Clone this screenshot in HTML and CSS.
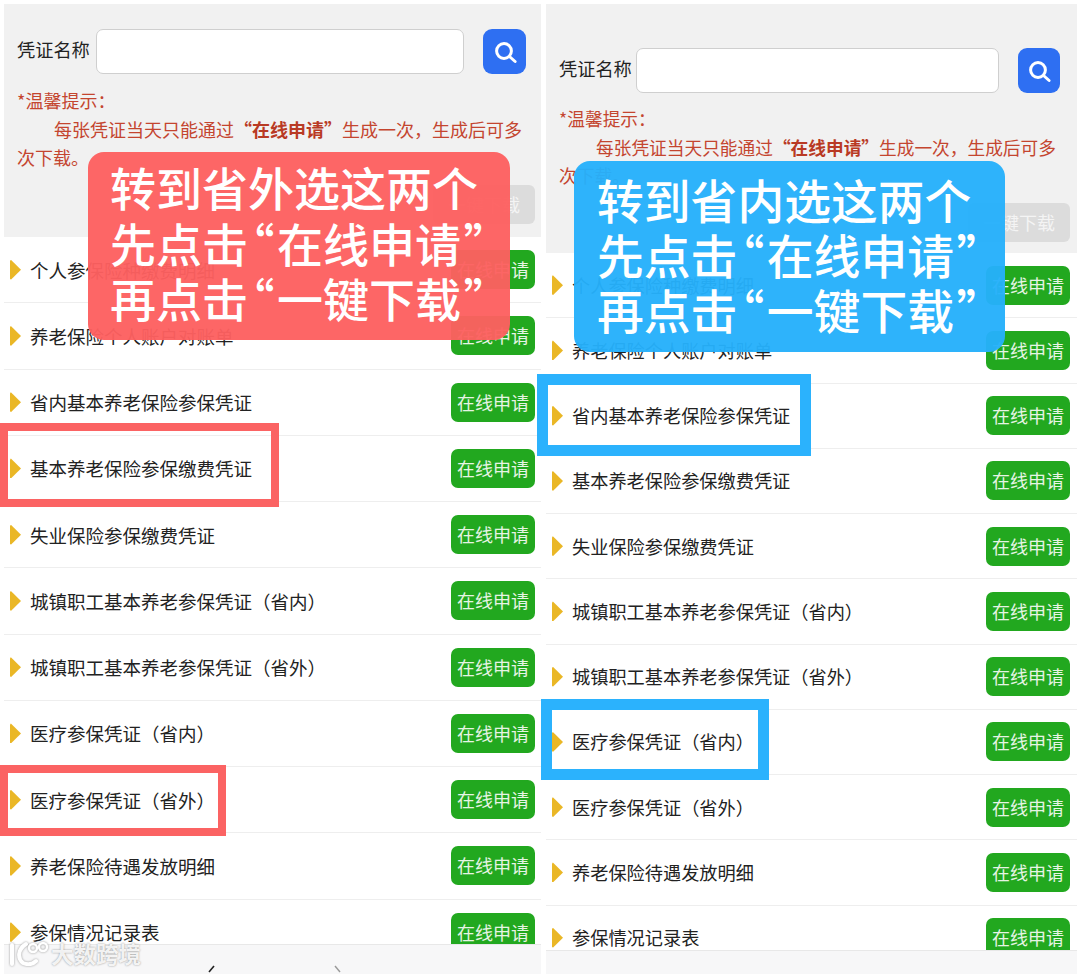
FILE: index.html
```html
<!DOCTYPE html>
<html lang="zh-CN">

<head>
    <meta charset="UTF-8">
    <meta name="viewport" content="width=device-width, initial-scale=1.0">
    <title>凭证名称</title>
    <link rel="stylesheet" href="styles.css">
</head>

<body>
    <div class="screens">

        <!-- Tela da esquerda:省外 -->
        <section class="phone phone-left">
            <div class="search-box">
                <div class="search-row">
                    <label class="search-label">凭证名称</label>
                    <div class="search-input"></div>
                    <button class="search-btn">
                        <svg width="26" height="26" viewBox="0 0 26 26"><circle cx="12" cy="12" r="7.4" fill="none" stroke="#fff" stroke-width="3"/><path d="M17.5 17.5l5.6 5" stroke="#fff" stroke-width="3" stroke-linecap="round"/></svg>
                    </button>
                </div>
                <p class="tip-title">*温馨提示：</p>
                <p class="tip-text">每张凭证当天只能通过<b>“在线申请”</b>生成一次，生成后可多次下载。</p>
                <div class="download-row"><span class="download-btn">一键下载</span></div>
            </div>
            <ul class="cert-list">
                <li><i></i><span>个人参保险种缴费明细</span><a>在线申请</a></li>
                <li><i></i><span>养老保险个人账户对账单</span><a>在线申请</a></li>
                <li><i></i><span>省内基本养老保险参保凭证</span><a>在线申请</a></li>
                <li><i></i><span>基本养老保险参保缴费凭证</span><a>在线申请</a></li>
                <li><i></i><span>失业保险参保缴费凭证</span><a>在线申请</a></li>
                <li><i></i><span>城镇职工基本养老参保凭证（省内）</span><a>在线申请</a></li>
                <li><i></i><span>城镇职工基本养老参保凭证（省外）</span><a>在线申请</a></li>
                <li><i></i><span>医疗参保凭证（省内）</span><a>在线申请</a></li>
                <li><i></i><span>医疗参保凭证（省外）</span><a>在线申请</a></li>
                <li><i></i><span>养老保险待遇发放明细</span><a>在线申请</a></li>
                <li><i></i><span>参保情况记录表</span><a>在线申请</a></li>
            </ul>
            <div class="bottom-bar">
                <svg class="nav-ticks" width="134" height="8" viewBox="0 0 134 8"><path d="M6 1L1 7" stroke="#222" stroke-width="1.6"/><path d="M127 1l5 6" stroke="#999" stroke-width="1.4"/></svg>
            </div>
        </section>

        <!-- Tela da direita: 省内 -->
        <section class="phone phone-right">
            <div class="search-box">
                <div class="search-row">
                    <label class="search-label">凭证名称</label>
                    <div class="search-input"></div>
                    <button class="search-btn">
                        <svg width="26" height="26" viewBox="0 0 26 26"><circle cx="12" cy="12" r="7.4" fill="none" stroke="#fff" stroke-width="3"/><path d="M17.5 17.5l5.6 5" stroke="#fff" stroke-width="3" stroke-linecap="round"/></svg>
                    </button>
                </div>
                <p class="tip-title">*温馨提示：</p>
                <p class="tip-text">每张凭证当天只能通过<b>“在线申请”</b>生成一次，生成后可多次下载。</p>
                <div class="download-row"><span class="download-btn">一键下载</span></div>
            </div>
            <ul class="cert-list">
                <li><i></i><span>个人参保险种缴费明细</span><a>在线申请</a></li>
                <li><i></i><span>养老保险个人账户对账单</span><a>在线申请</a></li>
                <li><i></i><span>省内基本养老保险参保凭证</span><a>在线申请</a></li>
                <li><i></i><span>基本养老保险参保缴费凭证</span><a>在线申请</a></li>
                <li><i></i><span>失业保险参保缴费凭证</span><a>在线申请</a></li>
                <li><i></i><span>城镇职工基本养老参保凭证（省内）</span><a>在线申请</a></li>
                <li><i></i><span>城镇职工基本养老参保凭证（省外）</span><a>在线申请</a></li>
                <li><i></i><span>医疗参保凭证（省内）</span><a>在线申请</a></li>
                <li><i></i><span>医疗参保凭证（省外）</span><a>在线申请</a></li>
                <li><i></i><span>养老保险待遇发放明细</span><a>在线申请</a></li>
                <li><i></i><span>参保情况记录表</span><a>在线申请</a></li>
            </ul>
            <div class="bottom-bar"></div>
        </section>

        <!-- Marcações por cima das telas -->
        <div class="callout callout-red">转到省外选这两个<br>先点击<q>“</q>在线申请<q>”</q><br>再点击<q>“</q>一键下载<q>”</q></div>
        <div class="callout callout-blue">转到省内选这两个<br>先点击<q>“</q>在线申请<q>”</q><br>再点击<q>“</q>一键下载<q>”</q></div>

        <div class="mark mark-red mark-r1"></div>
        <div class="mark mark-red mark-r2"></div>
        <div class="mark mark-blue mark-b1"></div>
        <div class="mark mark-blue mark-b2"></div>

        <div class="watermark">
            <svg width="42" height="26" viewBox="0 0 42 26"><path d="M3 5v19M17 4C9 9 8 18 14 23c5 2 10 1 13-2" fill="none" stroke="#fff" stroke-width="4" stroke-linecap="round"/><circle cx="24" cy="8" r="4" fill="none" stroke="#fff" stroke-width="2.4"/><circle cx="34" cy="7" r="4" fill="none" stroke="#fff" stroke-width="2.4"/></svg>
            <span>大数跨境</span>
        </div>
    </div>
</body>

</html>
```

FILE: styles.css
```css
* {
    box-sizing: border-box;
}

body {
    margin: 0;
    background-color: #fff;
    font-family: "Noto Sans CJK SC", "Noto Sans", sans-serif;
    color: #222;
}

p {
    margin: 0;
}

/* Duas telas lado a lado */
.screens {
    position: relative;
    display: flex;
    height: 974px;
    overflow: hidden;
    padding-top: 4px;
}

.phone {
    display: flex;
    flex-direction: column;
    height: 100%;
}

.phone-left {
    width: 537px;
    margin-left: 4px;
}

.phone-right {
    width: 531px;
    margin-left: 5px;
}

/* Caixa de busca */
.search-box {
    background-color: #f1f1f1;
    flex: none;
}

.phone-left .search-box {
    height: 233px;
    padding: 25px 6px 0 13px;
}

.phone-right .search-box {
    height: 249px;
    padding: 44px 7px 0 13px;
}

.search-row {
    display: flex;
    align-items: center;
    height: 45px;
}

.search-label {
    font-size: 18.2px;
    flex: none;
    white-space: nowrap;
    padding-bottom: 6px;
}

.phone-left .search-label {
    width: 79px;
}

.phone-right .search-label {
    width: 77px;
}

.search-input {
    height: 100%;
    background-color: #fff;
    border: 1px solid #cfcfcf;
    border-radius: 7px;
}

.phone-left .search-input {
    width: 368px;
}

.phone-right .search-input {
    width: 363px;
}

.search-btn {
    height: 100%;
    padding: 0;
    border: none;
    border-radius: 9px;
    background-color: #2e6ff2;
    display: flex;
    align-items: center;
    justify-content: center;
    margin-left: 19px;
}

.phone-left .search-btn {
    width: 43px;
}

.phone-right .search-btn {
    width: 42px;
}

.tip-title,
.tip-text {
    line-height: 28.5px;
    color: #c4452f;
}

.phone-left .tip-title,
.phone-left .tip-text {
    font-size: 18px;
}

.phone-right .tip-title,
.phone-right .tip-text {
    font-size: 17.7px;
}

.phone-left .tip-title {
    margin-top: 12px;
}

.phone-right .tip-title {
    margin-top: 11px;
}

.tip-text {
    text-indent: 37px;
    padding-right: 6px;
}

.tip-text b {
    font-weight: 700;
    color: #b93a24;
}

.download-row {
    display: flex;
    justify-content: flex-end;
    margin-top: 13px;
}

.download-btn {
    width: 102px;
    height: 39px;
    line-height: 38px;
    text-align: center;
    font-size: 18px;
    color: #f4f4f4;
    background-color: #dcdcdc;
    border-radius: 6px;
}

/* Lista de certificados */
.cert-list {
    list-style-type: none;
    margin: 0;
    padding: 0;
    flex: 1;
    min-height: 0;
    overflow: hidden;
}

.cert-list li {
    display: flex;
    align-items: center;
    border-bottom: 1px solid #eee;
    padding: 0 6px;
}

.phone-left .cert-list li {
    height: 66.25px;
    font-size: 18.5px;
}

.phone-right .cert-list li {
    height: 65.25px;
    font-size: 18.2px;
    padding-right: 7px;
}

.phone-right .cert-list span {
    padding-bottom: 1px;
}

.cert-list i {
    width: 11px;
    height: 20px;
    background-color: #eab726;
    clip-path: polygon(8% 0, 100% 50%, 8% 100%, 0 94%, 0 6%);
    margin-right: 9px;
    flex: none;
}

.cert-list span {
    flex: 1;
    white-space: nowrap;
}

.cert-list a {
    width: 84px;
    height: 39px;
    line-height: 38px;
    text-align: center;
    font-size: 18px;
    color: #e6f4e4;
    background-color: #22a81f;
    border-radius: 7px;
    flex: none;
}

.bottom-bar {
    flex: none;
    background-color: #f7f7f8;
    border-top: 1px solid #e8e8e8;
    position: relative;
}

.phone-left .bottom-bar {
    height: 30px;
}

.phone-right .bottom-bar {
    height: 24px;
}

.nav-ticks {
    position: absolute;
    left: 204px;
    bottom: 1px;
}

/* Avisos coloridos */
.callout {
    position: absolute;
    font-weight: 500;
    color: #fff;
    white-space: nowrap;
    border-radius: 16px;
}

.callout q {
    quotes: none;
    font-feature-settings: "palt";
    padding: 0 3px;
}

.callout-red {
    left: 88px;
    top: 152px;
    width: 422px;
    height: 188px;
    padding: 7px 0 0 22px;
    font-size: 46px;
    line-height: 55.5px;
    background-color: rgba(253, 96, 96, 0.96);
}

.callout-blue {
    left: 574px;
    top: 161px;
    width: 431px;
    height: 191px;
    padding: 10px 0 0 23px;
    font-size: 46.8px;
    line-height: 55px;
    background-color: rgba(37, 176, 251, 0.96);
}

/* Caixas de destaque */
.mark {
    position: absolute;
}

.mark-red {
    border: 8px solid #fb6363;
}

.mark-blue {
    border: 11px solid #2bb2fd;
}

.mark-r1 {
    left: 0;
    top: 423px;
    width: 279px;
    height: 84px;
}

.mark-r2 {
    left: 0;
    top: 765px;
    width: 226px;
    height: 71px;
}

.mark-b1 {
    left: 537px;
    top: 374px;
    width: 274px;
    height: 82px;
}

.mark-b2 {
    left: 541px;
    top: 699px;
    width: 228px;
    height: 81px;
}

.watermark {
    position: absolute;
    left: 9px;
    top: 939px;
    display: flex;
    align-items: center;
    font-size: 22.5px;
    font-weight: 700;
    line-height: 28px;
    color: rgba(255, 255, 255, 0.88);
    text-shadow: 0 0 2px #8c8c8c;
}

.watermark svg {
    filter: drop-shadow(0 0 1px #999);
}
```
